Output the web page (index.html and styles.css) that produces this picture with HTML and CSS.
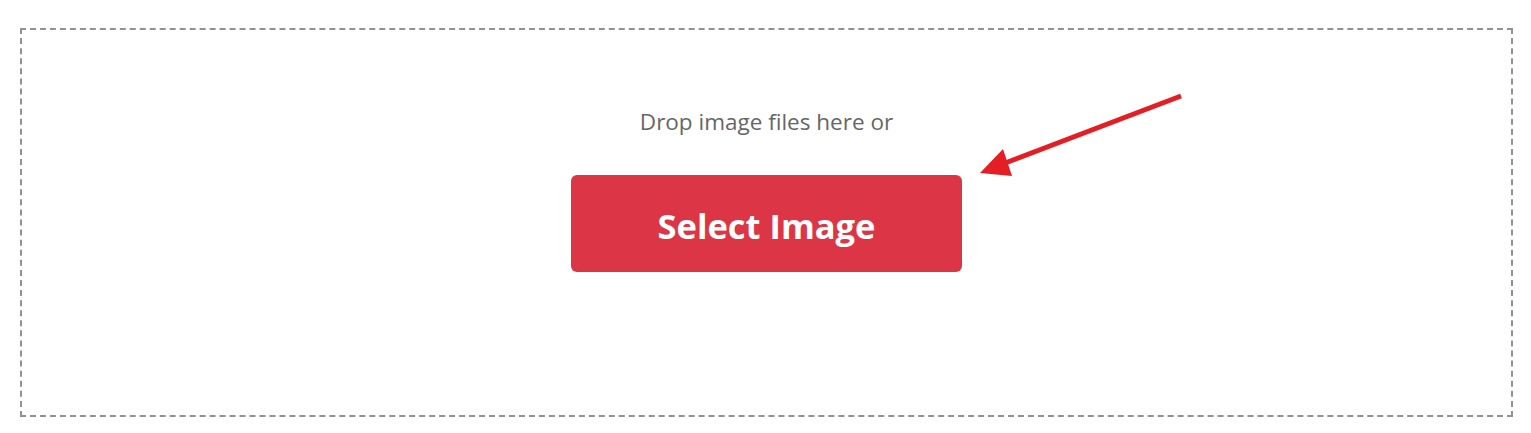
FILE: index.html
```html
<!DOCTYPE html>
<html>
<head>
<meta charset="utf-8">
<link rel="stylesheet" href="styles.css">
</head>
<body>
<div class="page">
  <div class="dropzone">
    <p class="hint">Drop image files here or</p>
    <button class="select-btn">Select Image</button>
  </div>
  <svg class="arrow" width="1531" height="433" viewBox="0 0 1531 433">
    <line x1="1181" y1="96" x2="1000" y2="165" stroke="#e31e24" stroke-width="5"/>
    <polygon points="980,173 1003,149 1012,176" fill="#e31e24"/>
  </svg>
</div>
</body>
</html>
```
FILE: styles.css
```css
html, body {
  margin: 0;
  padding: 0;
  background: #fff;
}
.page {
  position: relative;
  padding: 28px 18px 16px 20px;
  font-family: "Open Sans", "Noto Sans", sans-serif;
}
.dropzone {
  box-sizing: border-box;
  height: 389px;
  border: 2px dashed #929292;
  display: flex;
  flex-direction: column;
  align-items: center;
  padding-top: 77px;
}
.hint {
  margin: 0;
  font-size: 22.5px;
  line-height: 30px;
  color: #666;
}
.select-btn {
  margin-top: 38px;
  width: 391px;
  height: 97px;
  border: none;
  border-radius: 6px;
  background: #dc3545;
  color: #fff;
  font-family: "Open Sans", "Noto Sans", sans-serif;
  font-weight: 700;
  font-size: 34.5px;
  padding: 4px 0 0 0;
}
.arrow {
  position: absolute;
  left: 0;
  top: 0;
  pointer-events: none;
}
```
